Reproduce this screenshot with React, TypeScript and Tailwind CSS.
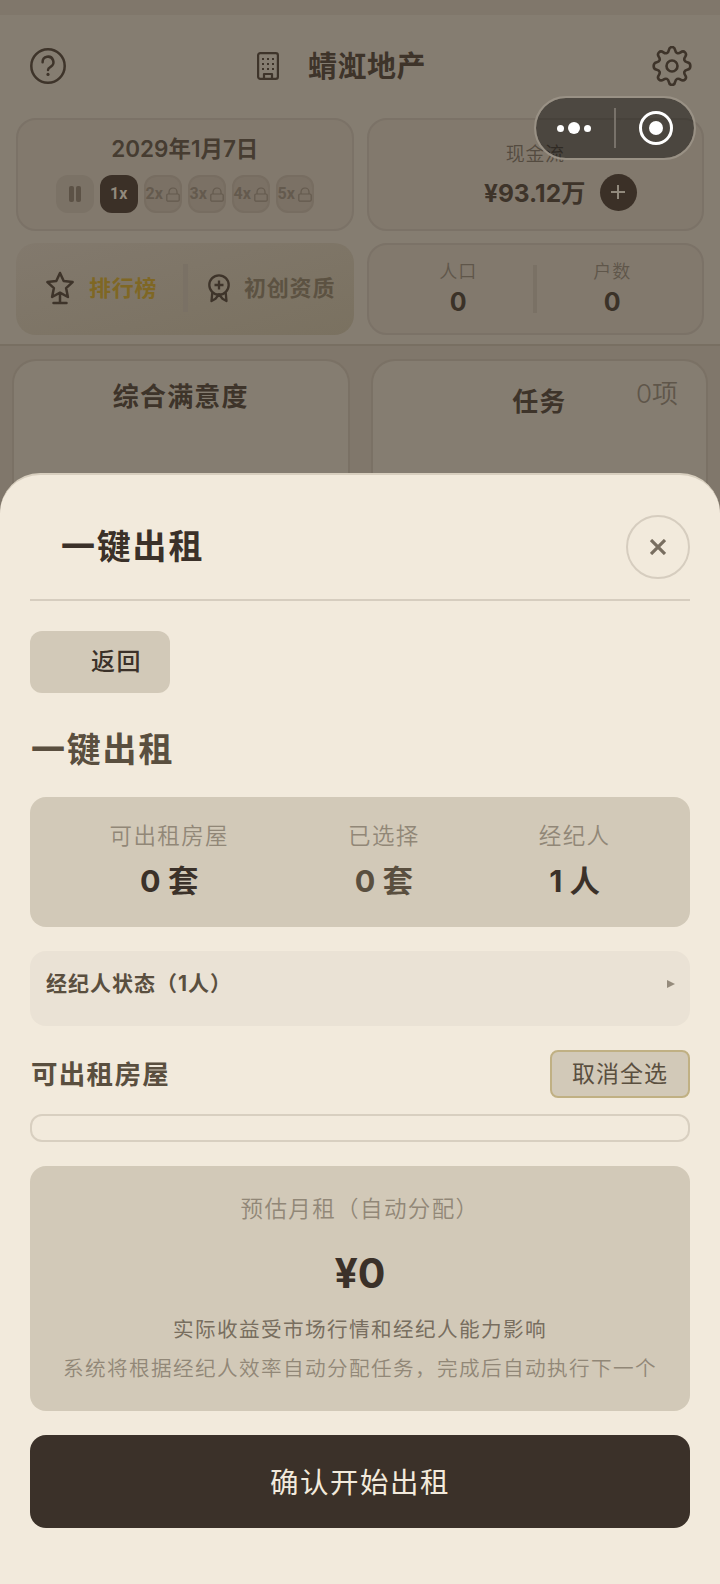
import type { ReactNode } from "react"
import { clsx } from "clsx"

const speeds = [2, 3, 4, 5]

const rentStats = [
    { label: "可出租房屋", value: "0 套", muted: false },
    { label: "已选择", value: "0 套", muted: true },
    { label: "经纪人", value: "1 人", muted: false },
]

function HelpIcon() {
    return (
        <svg className="w-9 h-9" viewBox="0 0 36 36" fill="none" stroke="currentColor" strokeWidth="2.5" strokeLinecap="round">
            <circle cx="18" cy="18" r="16.7" />
            <path d="M12.6 14.2a5.4 5.4 0 1 1 8 4.6c-1.8 1-2.6 1.9-2.6 3.1" />
            <circle cx="18" cy="26.4" r="1.6" fill="currentColor" stroke="none" />
        </svg>
    )
}

function BuildingIcon() {
    return (
        <svg className="w-[22px] h-7" viewBox="0 0 22 28" fill="none" stroke="currentColor" strokeWidth="2.2" strokeLinejoin="round">
            <rect x="1.1" y="1.1" width="19.8" height="25.8" rx="2.2" />
            <path d="M7 27v-5h8v5" />
            <path d="M5 7h12M5 12h12M5 17h12" strokeWidth="2" strokeDasharray="2 3" />
        </svg>
    )
}

function GearIcon() {
    return (
        <svg className="w-10 h-10" viewBox="0 0 40 40" fill="none" stroke="currentColor" strokeWidth="2.6" strokeLinejoin="round">
            <circle cx="20" cy="20" r="5.5" />
            <path d="M16.8 4.2c.7-4.2 5.7-4.2 6.4 0 .5 3 2.9 4 5.4 2.2 3.4-2.5 6.9.9 4.6 4.4-1.800 2.500-.9 4.900 2 5.400 4.200.7 4.200 6.900 0 7.600-2.900.5-3.800 2.900-2 5.400 2.300 3.300-1.200 6.700-4.600 4.400-2.500-1.800-4.900-.8-5.400 2.200-.7 4.200-5.700 4.200-6.400 0-.5-3-2.900-4-5.400-2.200-3.400 2.300-6.900-1.100-4.600-4.400 1.800-2.500.9-4.900-2-5.400-4.200-.7-4.200-6.900 0-7.600 2.900-.5 3.800-2.900 2-5.400-2.300-3.500 1.200-6.900 4.600-4.400 2.500 1.800 4.900.8 5.400-2.200z" />
        </svg>
    )
}

function LockIcon() {
    return (
        <svg className="w-[14px] h-[15px] shrink-0" viewBox="0 0 14 15" fill="none" stroke="currentColor" strokeWidth="1.2">
            <rect x=".8" y="7" width="12.4" height="7.2" rx="1.2" />
            <path d="M3 7V5a4 4 0 0 1 8 0v2" />
        </svg>
    )
}

function TrophyIcon() {
    return (
        <svg className="w-7 h-[34px]" viewBox="0 0 28 34" fill="none" stroke="currentColor" strokeWidth="2.5" strokeLinejoin="round" strokeLinecap="round">
            <path d="M14 2l3.7 8 8.900 1.100-6.500 6 1.800 8.900L14 21.700 6.100 26l1.800-8.900-6.500-6 8.900-1.100z" />
            <path d="M14 23v9M7.500 32h13" />
        </svg>
    )
}

function MedalIcon() {
    return (
        <svg className="w-[22px] h-[29px]" viewBox="0 0 22 29" fill="none" stroke="currentColor" strokeWidth="2.3" strokeLinejoin="round">
            <circle cx="11" cy="11" r="9.7" />
            <path d="M11 6.500v9M6.500 11h9" />
            <path d="M4.300 18.500L3.500 27l4-2.200 3.500-4.600 3.500 4.600 4 2.200-.8-8.500" />
        </svg>
    )
}

function Card({ className, children }: { className?: string; children: ReactNode }) {
    return (
        <div className={clsx("rounded-[20px] border-2 border-[#7b7267] bg-[#82796d]", className)}>
            {children}
        </div>
    )
}

function Counter({ label, value }: { label: string; value: string }) {
    return (
        <div className="flex flex-col items-center">
            <span className="h-6 text-[18px] leading-6 tracking-[1px] font-[350] text-[#5f564a]">{label}</span>
            <span className="h-9 text-[25px] leading-9 font-bold text-[#3b3228]">{value}</span>
        </div>
    )
}

function Capsule() {
    return (
        <div className="absolute left-[534px] top-24 w-[162px] h-16 rounded-full border-2 border-[#999185] bg-black/42 bg-clip-padding flex items-center">
            <div className="w-[78px] pr-[3px] flex items-center justify-center gap-1">
                <span className="w-[7px] h-[7px] rounded-full bg-white" />
                <span className="w-3 h-3 rounded-full bg-white" />
                <span className="w-[7px] h-[7px] rounded-full bg-white" />
            </div>
            <div className="w-[2px] h-10 bg-[#78726a]" />
            <div className="flex-1 pl-[2px] flex justify-center">
                <div className="w-[34px] h-[34px] rounded-full border-[3px] border-white flex items-center justify-center">
                    <span className="w-[14px] h-[14px] rounded-full bg-white" />
                </div>
            </div>
        </div>
    )
}

function Dashboard() {
    return (
        <div className="text-[#3e342a]">
            <div className="h-[15px] bg-[#80776b]" />
            <div className="h-[331px] bg-[#857d71] border-b-2 border-[#786f62] px-4">
                <div className="h-[103px] px-[14px] pb-[2px] flex items-center justify-between">
                    <HelpIcon />
                    <div className="mr-[35px] flex items-center gap-[29px]">
                        <BuildingIcon />
                        <h1 className="pt-[2px] text-[29px] leading-10 font-bold tracking-[0.5px]">蜻渱地产</h1>
                    </div>
                    <div className="-mr-[2px]">
                        <GearIcon />
                    </div>
                </div>

                <div className="grid grid-cols-2 gap-[13px]">
                    <Card className="h-[113px] pt-[13px]">
                        <div className="h-8 text-center text-[22.5px] leading-8 font-semibold text-[#463c31]">2029年1月7日</div>
                        <div className="mt-[10px] flex justify-center gap-[6px] font-[Roboto] font-bold text-[16px]">
                            <div className="w-[38px] h-[38px] rounded-xl bg-[#7b7266] flex items-center justify-center gap-[2px]">
                                <span className="w-[5px] h-4 rounded-[2px] bg-[#5c5246]" />
                                <span className="w-[5px] h-4 rounded-[2px] bg-[#5c5246]" />
                            </div>
                            <div className="w-[38px] h-[38px] rounded-xl bg-[#3b3027] text-[#91897c] flex items-center justify-center">1x</div>
                            {speeds.map((speed) => (
                                <div key={speed} className="w-[38px] h-[38px] rounded-xl border-2 border-[#776d61] bg-[#7b7165] text-[#645a4e] flex items-center justify-center gap-[3px]">
                                    {speed}x
                                    <LockIcon />
                                </div>
                            ))}
                        </div>
                    </Card>
                    <Card className="h-[113px] pt-[22px]">
                        <div className="h-[26px] text-center text-[19px] leading-[26px] tracking-[0.6px] font-[350] text-[#544b40]">现金流</div>
                        <div className="pl-[50px] mt-[5px] flex items-center justify-center gap-[14px]">
                            <span className="pt-[2px] text-[24.5px] leading-9 font-bold">¥93.12万</span>
                            <span className="w-[37px] h-[37px] rounded-full bg-[#3b3027] text-[#91897c] flex items-center justify-center">
                                <svg className="w-[14px] h-[14px]" viewBox="0 0 14 14" stroke="currentColor" strokeWidth="2">
                                    <path d="M7 0v14M0 7h14" />
                                </svg>
                            </span>
                        </div>
                    </Card>
                </div>

                <div className="mt-3 grid grid-cols-2 gap-[13px]">
                    <div className="h-[92px] rounded-[20px] bg-linear-to-br from-[#82796d] to-[#7a7160] flex items-center pb-[2px]">
                        <div className="w-[167px] pl-[30px] shrink-0 flex items-center gap-[15px]">
                            <TrophyIcon />
                            <span className="text-[22px] tracking-[0.8px] font-bold text-[#7f6724]">排行榜</span>
                        </div>
                        <div className="w-[5px] h-12 shrink-0 bg-[#7a7165]" />
                        <div className="pl-5 flex items-center gap-[14px]">
                            <MedalIcon />
                            <span className="text-[22px] tracking-[0.8px] font-bold whitespace-nowrap text-[#5c5242]">初创资质</span>
                        </div>
                    </div>
                    <Card className="h-[92px] pt-[2px] flex items-center justify-center gap-14">
                        <Counter label="人口" value="0" />
                        <div className="w-1 h-12 mb-[2px] bg-[#7a7165]" />
                        <Counter label="户数" value="0" />
                    </Card>
                </div>
            </div>

            <div className="h-[140px] bg-[#80776b] pt-[13px] px-3 grid grid-cols-2 gap-[21px]">
                <div className="rounded-t-3xl border-2 border-b-0 border-[#7a7165] bg-[#857d71] pt-4 text-center">
                    <h2 className="h-10 text-[26px] leading-10 tracking-[1.2px] font-bold">综合满意度</h2>
                </div>
                <div className="rounded-t-3xl border-2 border-b-0 border-[#7a7165] bg-[#857d71] pt-[13px] px-7 flex items-start">
                    <div className="flex-1" />
                    <h2 className="pt-2 text-[26px] leading-10 tracking-[1px] font-bold">任务</h2>
                    <span className="flex-1 text-right text-[26px] leading-10 font-[350] text-[#5f564a]">0项</span>
                </div>
            </div>
        </div>
    )
}

function RentSheet() {
    return (
        <div className="absolute inset-x-0 top-[473px] h-[1111px] rounded-t-[40px] border-t-2 border-[#d8cfbf] bg-[#f2eadc] px-[30px] text-[#3b3129]">
            <div className="h-[126px] pt-[21px] pl-[31px] border-b-2 border-[#d6cdbf] flex items-center justify-between">
                <h2 className="pb-[1px] text-[34px] leading-[46px] tracking-[1.8px] font-bold">一键出租</h2>
                <button className="w-16 h-16 mb-[1px] rounded-full border-2 border-[#d6cdbf] text-[#786e60] flex items-center justify-center">
                    <svg className="w-4 h-4" viewBox="0 0 16 16" stroke="currentColor" strokeWidth="3.2">
                        <path d="M1 1l14 14M15 1L1 15" />
                    </svg>
                </button>
            </div>

            <button className="mt-[30px] w-[140px] h-[62px] rounded-xl bg-[#d2c9b8] pl-[61px] flex items-center text-[24px] tracking-[1.4px] font-medium">返回</button>

            <h3 className="mt-[34px] h-[46px] pl-[1px] text-[34px] leading-[46px] tracking-[1.8px] font-bold text-[#5a4f3f]">一键出租</h3>

            <div className="mt-6 h-[130px] rounded-2xl bg-[#d2c9b8] px-5 pt-[23px] flex justify-around">
                {rentStats.map((stat) => (
                    <div key={stat.label} className="flex flex-col items-center">
                        <span className="h-8 text-[22.5px] leading-8 tracking-[1.4px] font-[350] text-[#918777]">{stat.label}</span>
                        <span className={clsx("mt-[9px] h-10 text-[30.5px] leading-10 font-bold", stat.muted && "text-[#5a4f3f]")}>{stat.value}</span>
                    </div>
                ))}
            </div>

            <div className="mt-6 h-[75px] rounded-2xl bg-[#eae2d5] px-4 pt-[17px] flex items-start justify-between">
                <span className="text-[21px] leading-8 tracking-[1px] font-bold text-[#5a4f3f]">经纪人状态（1人）</span>
                <svg className="w-2 h-2 mt-3 -mr-[1px]" viewBox="0 0 8 8" fill="#958b7c">
                    <path d="M0 0l8 4-8 4z" />
                </svg>
            </div>

            <div className="mt-6 flex items-center justify-between">
                <h3 className="pl-[1px] text-[26.5px] leading-10 tracking-[1.3px] font-bold text-[#5a4f3f]">可出租房屋</h3>
                <button className="w-[140px] h-12 rounded-lg border-2 border-[#c0b083] bg-[#d2c9b8] text-[23px] tracking-[1px] text-[#5a4f3f]">取消全选</button>
            </div>

            <div className="mt-4 h-7 rounded-xl border-2 border-[#d8cfc0]" />

            <div className="mt-6 h-[245px] rounded-2xl bg-[#d2c9b8] pt-[27px] text-center whitespace-nowrap">
                <div className="h-8 text-[22.5px] leading-8 tracking-[1.4px] font-[350] text-[#918777]">预估月租（自动分配）</div>
                <div className="mt-5 h-14 text-[41px] leading-14 font-bold">¥0</div>
                <div className="mt-[13px] h-8 text-[20.6px] leading-8 tracking-[1.4px] text-[#786e5f]">实际收益受市场行情和经纪人能力影响</div>
                <div className="mt-[7px] h-8 text-[20.6px] leading-8 tracking-[1.4px] font-[350] text-[#918777]">系统将根据经纪人效率自动分配任务，完成后自动执行下一个</div>
            </div>

            <button className="mt-6 w-full h-[93px] pt-[3px] rounded-2xl bg-[#3b3129] text-[28.5px] tracking-[1.5px] text-[#f2eadc]">确认开始出租</button>
        </div>
    )
}

export default function App() {
    return (
        <div className="relative w-[720px] h-[1584px] overflow-hidden bg-[#80776b] font-['Inter','Noto_Sans_CJK_SC',sans-serif]">
            <Dashboard />
            <RentSheet />
            <Capsule />
        </div>
    )
}
